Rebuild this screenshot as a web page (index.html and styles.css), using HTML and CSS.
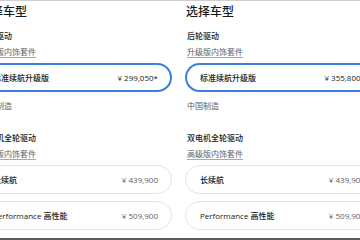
FILE: index.html
```html
<!DOCTYPE html>
<html lang="zh">
<head>
  <meta charset="UTF-8" />
  <meta name="viewport" content="width=device-width, initial-scale=1" />
  <title>选择车型</title>
  <link rel="stylesheet" href="styles.css">
</head>
<body>

  <div class="tira">

    <!-- Panel izquierdo -->
    <section class="panel">
      <h1 class="titulo">选择车型</h1>

      <h2 class="grupo">后轮驱动</h2>
      <a class="enlace">升级版内饰套件</a>
      <div class="opcion activa">
        <span>标准续航升级版</span>
        <span class="precio">¥ 299,050*</span>
      </div>
      <p class="nota">中国制造</p>

      <h2 class="grupo grupo-dos">双电机全轮驱动</h2>
      <a class="enlace">高级版内饰套件</a>
      <div class="opcion">
        <span>长续航</span>
        <span class="precio">¥ 439,900</span>
      </div>
      <div class="opcion">
        <span>Performance 高性能</span>
        <span class="precio">¥ 509,900</span>
      </div>
    </section>

    <!-- Panel derecho -->
    <section class="panel">
      <h1 class="titulo">选择车型</h1>

      <h2 class="grupo">后轮驱动</h2>
      <a class="enlace">升级版内饰套件</a>
      <div class="opcion activa">
        <span>标准续航升级版</span>
        <span class="precio">¥ 355,800*</span>
      </div>
      <p class="nota">中国制造</p>

      <h2 class="grupo grupo-dos">双电机全轮驱动</h2>
      <a class="enlace">高级版内饰套件</a>
      <div class="opcion">
        <span>长续航</span>
        <span class="precio">¥ 439,900</span>
      </div>
      <div class="opcion">
        <span>Performance 高性能</span>
        <span class="precio">¥ 509,900</span>
      </div>
    </section>

  </div>

</body>
</html>
```

FILE: styles.css
```css
* {
  margin: 0;
  padding: 0;
  box-sizing: border-box;
}

html, body {
  height: 100%;
}

body {
  width: 360px;
  height: 240px;
  overflow: hidden;
  background-color: #fff;
  border-top: 1px solid #cfcfcf;
  border-bottom: 2px solid #5a5a5a;
  font-family: "Open Sans", "Noto Sans CJK SC", sans-serif;
  font-size: 8px;
  line-height: 12px;
  color: #171a20;
}

/* Dos paneles lado a lado */
.tira {
  display: flex;
  gap: 13px;
  margin-left: -22px;
}

.panel {
  flex: 0 0 194px;
}

.titulo {
  margin: 3px 0 0 1px;
  font-size: 12px;
  line-height: 16px;
  font-weight: 500;
}

.grupo {
  margin: 10px 0 0 2px;
  font-size: 8px;
  line-height: 12px;
  font-weight: 500;
}

.grupo-dos {
  margin-top: 20px;
}

.enlace {
  display: block;
  width: fit-content;
  margin: 4px 0 0 2px;
  color: #5c5e62;
  text-decoration: underline;
  text-decoration-color: #a8a8a8;
  text-underline-offset: 2px;
}

.opcion {
  display: flex;
  align-items: center;
  justify-content: space-between;
  height: 29px;
  margin-top: 5px;
  padding: 0 13px 0 14px;
  border: 1px solid #e4e4e4;
  border-radius: 15px;
  font-weight: 500;
}

.opcion + .opcion {
  margin-top: 7px;
}

.opcion.activa {
  border: 2px solid #3a7fdc;
  padding: 0 12px 0 13px;
}

.precio {
  color: #5c5e62;
  font-weight: 400;
}

.activa .precio {
  color: #171a20;
  font-weight: 500;
}

.nota {
  margin: 8px 0 0 2px;
  color: #5c5e62;
}
```
